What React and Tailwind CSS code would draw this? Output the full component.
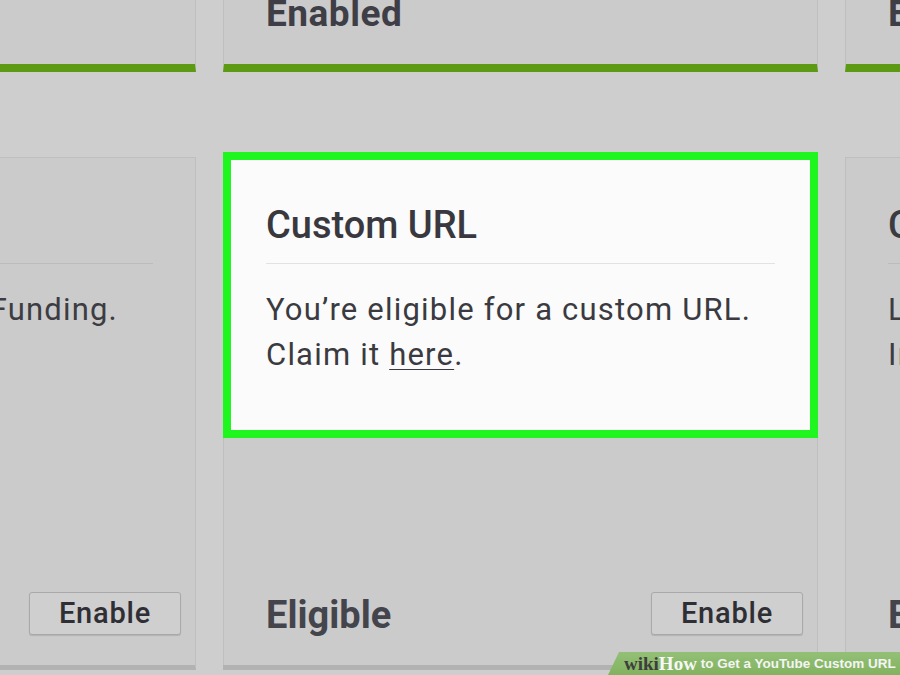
export default function App() {
  const TopCard = ({ label }) => (
    <div className="w-[595px] h-[120px] shrink-0 bg-[#cbcbcb] border-x border-[#bfbfbf] border-b-[8px] border-b-[#5b9a12] px-[42px] pt-[40px]">
      <div className="text-[37px] leading-[44px] font-bold tracking-[0.5px] text-[#3e3e46] whitespace-nowrap">{label}</div>
    </div>
  );

  const Button = () => (
    <div className="mb-[2px] w-[152px] h-[43px] shrink-0 flex items-center justify-center border border-[#a9a9a9] rounded-[3px] bg-[#cfcfcf] shadow-[0_1px_1px_rgba(0,0,0,0.12)] text-[29px] font-medium tracking-[0.8px] text-[#2e2e34]">
      Enable
    </div>
  );

  return (
    <div className="relative w-[900px] h-[675px] overflow-hidden bg-[#cecece] font-['Roboto',sans-serif]">
      <div className="-ml-[399px] -mt-[48px] flex flex-col gap-[80px]">
        <div className="flex gap-[27px]">
          <TopCard label="Enabled" />
          <TopCard label="Enabled" />
          <TopCard label="Enabled" />
        </div>

        <div className="flex items-start gap-[27px]">
          {/* left card */}
          <div className="mt-[5px] w-[595px] h-[513px] shrink-0 flex flex-col bg-[#cbcbcb] border-x border-t border-[#bfbfbf] border-b-[5px] border-b-[#b2b2b2]">
            <div className="h-[280px] px-[42px] pt-[45px]">
              <div className="text-[38px] leading-[44px] font-medium text-[#3a3a40] whitespace-nowrap">Fan Funding</div>
              <div className="mt-[16px] h-px bg-[#bcbcbc]" />
              <div className="mt-[23px] text-[31px] leading-[45px] tracking-[1.2px] text-[#3c3c42]">
                <div className="flex justify-end w-[474px]">
                  <span className="whitespace-nowrap shrink-0">Accept contributions with Fan Funding.</span>
                </div>
              </div>
            </div>
            <div className="flex-1 flex items-end justify-between pl-[42px] pr-[14px] pb-[28px]">
              <div className="text-[38px] leading-[44px] font-bold text-[#44444c]">Eligible</div>
              <Button />
            </div>
          </div>

          {/* middle card */}
          <div className="w-[595px] h-[518px] shrink-0 flex flex-col bg-[#cbcbcb] border-b-[5px] border-b-[#b2b2b2]">
            <div className="h-[286px] shrink-0 border-[8px] border-[#1ff51f] bg-[#fbfbfb] px-[35px] pt-[43px]">
              <div className="text-[38px] leading-[44px] font-medium text-[#38383e] whitespace-nowrap">Custom URL</div>
              <div className="mt-[16px] h-px bg-[#e2e2e2]" />
              <div className="mt-[23px] text-[31px] leading-[45px] tracking-[1.2px] text-[#3a3a40]">
                <div className="whitespace-nowrap">You’re eligible for a custom URL.</div>
                <div className="whitespace-nowrap">
                  Claim it <span className="underline decoration-1 underline-offset-[4px]">here</span>.
                </div>
              </div>
            </div>
            <div className="flex-1 flex items-end justify-between border-x border-[#bfbfbf] pl-[42px] pr-[14px] pb-[28px]">
              <div className="text-[38px] leading-[44px] font-bold text-[#44444c]">Eligible</div>
              <Button />
            </div>
          </div>

          {/* right card */}
          <div className="mt-[5px] w-[595px] h-[513px] shrink-0 flex flex-col bg-[#cbcbcb] border-x border-t border-[#bfbfbf] border-b-[5px] border-b-[#b2b2b2]">
            <div className="h-[280px] px-[42px] pt-[45px]">
              <div className="text-[38px] leading-[44px] font-medium text-[#3a3a40] whitespace-nowrap">Custom thumbnails</div>
              <div className="mt-[16px] h-px bg-[#bcbcbc]" />
              <div className="mt-[23px] text-[31px] leading-[45px] tracking-[1.2px] text-[#3c3c42]">
                <div className="whitespace-nowrap">Let viewers see a custom picture</div>
                <div className="whitespace-nowrap">In search results.</div>
              </div>
            </div>
            <div className="flex-1 flex items-end justify-between pl-[42px] pr-[14px] pb-[28px]">
              <div className="text-[38px] leading-[44px] font-bold text-[#44444c]">Eligible</div>
              <Button />
            </div>
          </div>
        </div>
      </div>

      <div className="absolute right-0 bottom-0 h-[23px] w-[292px] bg-gradient-to-b from-[#93c076] to-[#82b25f] [clip-path:polygon(11px_0,100%_0,100%_100%,0_100%)] flex items-center pl-[16px] whitespace-nowrap">
        <span className="font-['Liberation_Serif',serif] font-bold text-[19px] leading-none text-[#3d3d3d]">wiki</span>
        <span className="font-['Liberation_Serif',serif] font-bold text-[19px] leading-none text-[#f7f7f7]">How</span>
        <span className="ml-[4px] font-['Liberation_Sans',sans-serif] font-bold text-[13.5px] leading-none text-[#f4f4f4]">to Get a YouTube Custom URL</span>
      </div>
    </div>
  );
}
